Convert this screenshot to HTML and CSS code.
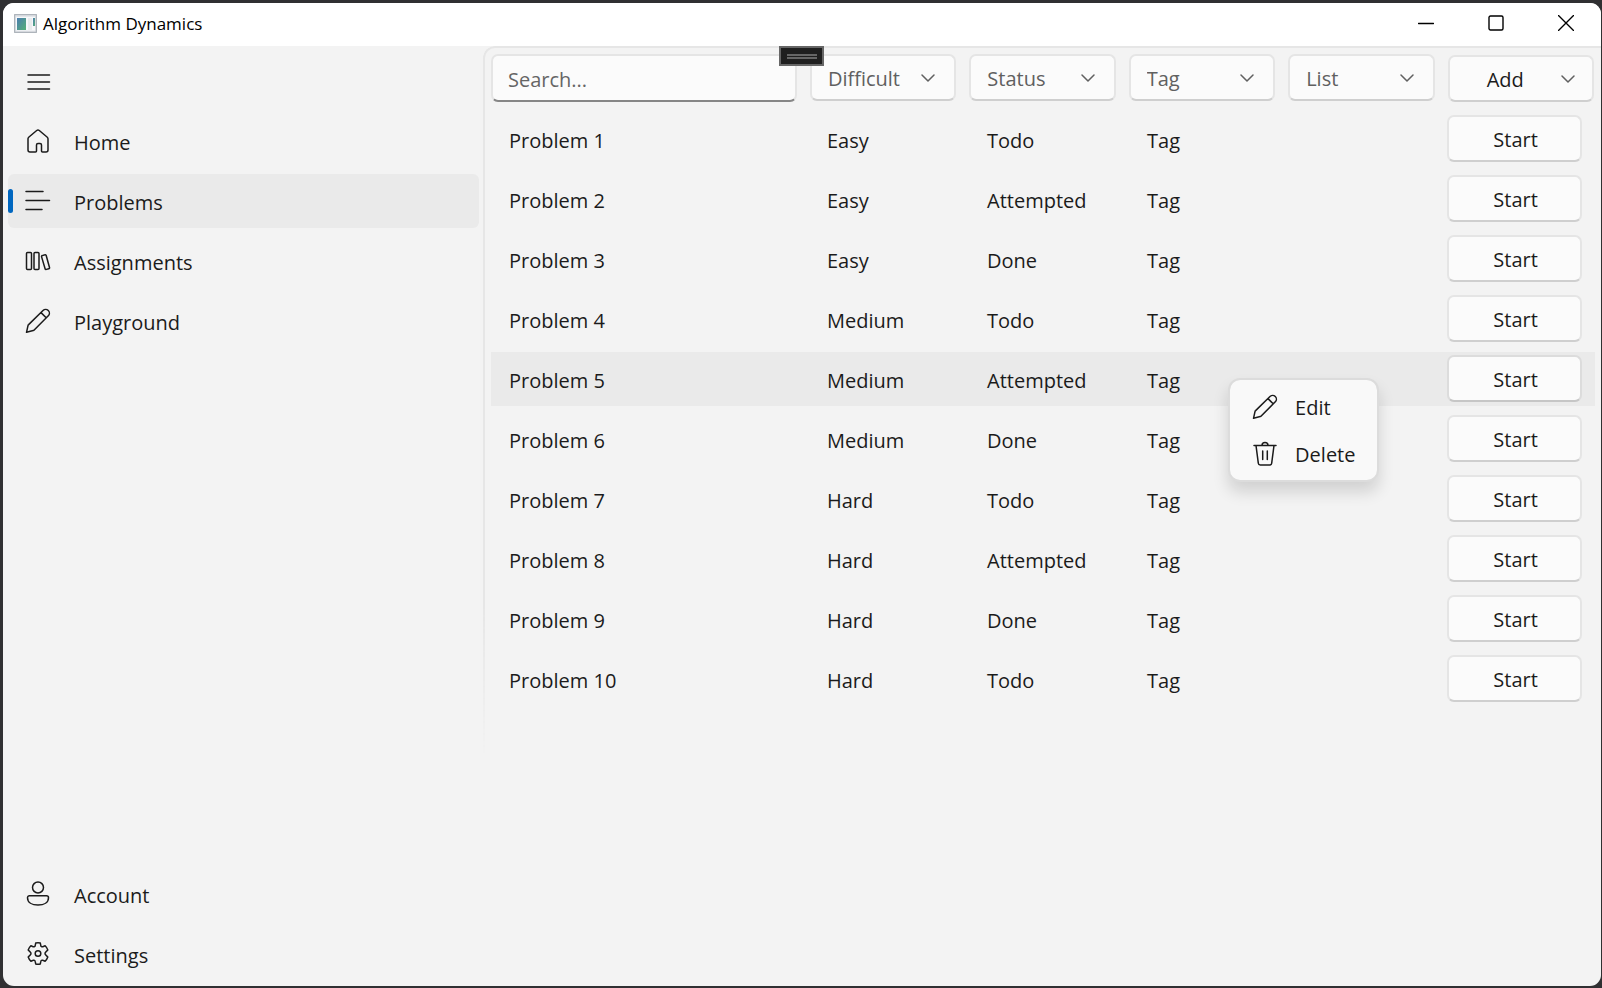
FILE: index.html
```html
<!DOCTYPE html>
<html lang="en">
<head>
<meta charset="utf-8">
<title>Algorithm Dynamics</title>
<link rel="stylesheet" href="styles.css">
</head>
<body>
<svg class="sprite" aria-hidden="true">
  <symbol id="chevron" viewBox="0 0 14 8"><path d="M1 1l6 6 6-6"/></symbol>
  <symbol id="pencil" viewBox="0 0 26 26"><path d="M1.500 24.300l1.500-6.700a2 2 0 0 1 .6-1L18 2.500a3.600 3.600 0 0 1 5.300 5.300L9.200 22a2 2 0 0 1-1 .6zM16 4.600l5.200 5.200"/></symbol>
</svg>
<div class="window">
  <header class="titlebar">
    <svg class="app-icon" viewBox="0 0 23 19"><defs><linearGradient id="g" x1="0" y1="0" x2="1" y2="1"><stop offset="0" stop-color="#4c7db0"/><stop offset="1" stop-color="#55b076"/></linearGradient></defs><rect x=".5" y=".5" width="22" height="18" rx="1" fill="#e3e6ea" stroke="#aeb4bb"/><rect x="2" y="3" width="19" height="13.500" fill="#f7f8fa"/><rect x="3" y="4" width="9" height="12" fill="url(#g)"/><rect x="14" y="4" width="4" height="12" fill="#e9ebed"/><rect x="19" y="4" width="2" height="8" fill="url(#g)"/></svg>
    <h1 class="title">Algorithm Dynamics</h1>
    <div class="caption">
      <button class="caption-btn" aria-label="Minimize"><svg viewBox="0 0 16 16"><path d="M.5 8.500h15"/></svg></button>
      <button class="caption-btn" aria-label="Maximize"><svg viewBox="0 0 16 16"><rect x="1" y="1" width="14" height="14" rx="1.500"/></svg></button>
      <button class="caption-btn" aria-label="Close"><svg viewBox="0 0 16 16"><path d="M.5.5l15 15M15.500.5l-15 15"/></svg></button>
    </div>
  </header>
  <div class="body">
    <nav class="sidebar">
      <button class="nav-item" aria-label="Menu"><svg class="icon" viewBox="0 0 26 26"><path d="M3 7h21.500M3 14h21.500M3 21h21.500"/></svg></button>
      <a class="nav-item" href="#"><svg class="icon" viewBox="0 0 26 26"><path d="M3 10.700a2 2 0 0 1 .7-1.500l8-6.700a2 2 0 0 1 2.600 0l8 6.700a2 2 0 0 1 .7 1.500V22a2 2 0 0 1-2 2h-3.500a1 1 0 0 1-1-1v-6a1.500 1.500 0 0 0-1.500-1.500h-2a1.500 1.500 0 0 0-1.500 1.500v6a1 1 0 0 1-1 1H5a2 2 0 0 1-2-2z"/></svg><span class="label">Home</span></a>
      <a class="nav-item selected" href="#" aria-current="page"><svg class="icon" viewBox="0 0 26 26"><path d="M1 3.500h17M1 12.500h23.500M1 21.500h16"/></svg><span class="label">Problems</span></a>
      <a class="nav-item" href="#"><svg class="icon" viewBox="0 0 26 26"><rect x="1.500" y="4.500" width="5" height="17" rx="1"/><rect x="9" y="4.500" width="5" height="17" rx="1"/><path d="M17.300 7.600l2.600-.8a1 1 0 0 1 1.300.7l3.300 12a1 1 0 0 1-.7 1.200l-2.400.7a1 1 0 0 1-1.300-.7L16.600 8.900a1 1 0 0 1 .7-1.300z"/></svg><span class="label">Assignments</span></a>
      <a class="nav-item" href="#"><svg class="icon"><use href="#pencil"/></svg><span class="label">Playground</span></a>
      <a class="nav-item footer-start" href="#"><svg class="icon" viewBox="0 0 26 26"><circle cx="13" cy="6.500" r="5.500"/><path d="M4.500 14.700h17a2 2 0 0 1 2 2c0 4.800-4.600 7.300-10.500 7.300S2.500 21.500 2.500 16.700a2 2 0 0 1 2-2z"/></svg><span class="label">Account</span></a>
      <a class="nav-item" href="#"><svg class="icon" viewBox="0 0 26 26"><circle cx="13" cy="12.500" r="2.800"/><path d="M10.700 2.100a11 11 0 0 1 4.600 0l.5 2.500a1.400 1.400 0 0 0 2 1.100l2.300-.9a10.500 10.500 0 0 1 2.700 4.200l-1.900 1.900a1.900 1.900 0 0 0 0 3.200l1.900 1.900a10.500 10.500 0 0 1-2.700 4.200l-2.300-.9a1.400 1.400 0 0 0-2 1.100l-.5 2.500a11 11 0 0 1-4.600 0l-.5-2.500a1.400 1.400 0 0 0-2-1.100l-2.300.9a10.500 10.500 0 0 1-2.700-4.200l1.900-1.900a1.900 1.900 0 0 0 0-3.200L3.200 9a10.500 10.500 0 0 1 2.700-4.200l2.300.9a1.400 1.400 0 0 0 2-1.100z"/></svg><span class="label">Settings</span></a>
    </nav>
    <main class="content">
      <div class="filters">
        <input class="search" type="text" placeholder="Search..." aria-label="Search">
        <div class="picker"><select class="control" aria-label="Difficulty"><option>Difficult</option></select><svg class="chevron"><use href="#chevron"/></svg></div>
        <div class="picker"><select class="control" aria-label="Status"><option>Status</option></select><svg class="chevron"><use href="#chevron"/></svg></div>
        <div class="picker"><select class="control" aria-label="Tag"><option>Tag</option></select><svg class="chevron"><use href="#chevron"/></svg></div>
        <div class="picker"><select class="control" aria-label="List"><option>List</option></select><svg class="chevron"><use href="#chevron"/></svg></div>
        <button class="control add">Add<svg class="chevron"><use href="#chevron"/></svg></button>
      </div>
      <table class="problems">
        <colgroup><col class="col-name"><col class="col-field"><col class="col-field"><col class="col-field"><col><col class="col-action"></colgroup>
        <tbody>
          <tr><td>Problem 1</td><td>Easy</td><td>Todo</td><td>Tag</td><td></td><td class="action"><button class="control start">Start</button></td></tr>
          <tr><td>Problem 2</td><td>Easy</td><td>Attempted</td><td>Tag</td><td></td><td class="action"><button class="control start">Start</button></td></tr>
          <tr><td>Problem 3</td><td>Easy</td><td>Done</td><td>Tag</td><td></td><td class="action"><button class="control start">Start</button></td></tr>
          <tr><td>Problem 4</td><td>Medium</td><td>Todo</td><td>Tag</td><td></td><td class="action"><button class="control start">Start</button></td></tr>
          <tr class="active"><td>Problem 5</td><td>Medium</td><td>Attempted</td><td class="anchor">Tag
            <div class="menu" role="menu">
              <button class="menu-item" role="menuitem"><svg class="icon"><use href="#pencil"/></svg><span class="label">Edit</span></button>
              <button class="menu-item" role="menuitem"><svg class="icon" viewBox="0 0 26 26"><path d="M2 4.500h22M10 4.500a3 3 0 0 1 6 0M4 4.500l2.300 17.700a2 2 0 0 0 2 1.800h9.400a2 2 0 0 0 2-1.800L22 4.500M10.700 10v8.500M15.300 10v8.500"/></svg><span class="label">Delete</span></button>
            </div></td><td></td><td class="action"><button class="control start">Start</button></td></tr>
          <tr><td>Problem 6</td><td>Medium</td><td>Done</td><td>Tag</td><td></td><td class="action"><button class="control start">Start</button></td></tr>
          <tr><td>Problem 7</td><td>Hard</td><td>Todo</td><td>Tag</td><td></td><td class="action"><button class="control start">Start</button></td></tr>
          <tr><td>Problem 8</td><td>Hard</td><td>Attempted</td><td>Tag</td><td></td><td class="action"><button class="control start">Start</button></td></tr>
          <tr><td>Problem 9</td><td>Hard</td><td>Done</td><td>Tag</td><td></td><td class="action"><button class="control start">Start</button></td></tr>
          <tr><td>Problem 10</td><td>Hard</td><td>Todo</td><td>Tag</td><td></td><td class="action"><button class="control start">Start</button></td></tr>
        </tbody>
      </table>
    </main>
    <div class="debug-handle"></div>
  </div>
</div>
</body>
</html>
```
FILE: styles.css
```css
* { box-sizing: border-box; }
body {
  margin: 0;
  min-height: 100vh;
  display: flex;
  padding: 3px 1px 2px 3px;
  background: #303032;
  color: #1b1b1b;
  font: 20px/28px "Open Sans", "Noto Sans", sans-serif;
}
button, input, select { font: inherit; color: inherit; margin: 0; }
button { padding: 0; border: 0; background: none; }
svg { fill: none; stroke: currentColor; stroke-width: 1.5; stroke-linecap: round; stroke-linejoin: round; flex: none; }
.sprite { position: absolute; width: 0; height: 0; }
.window {
  flex: 1;
  display: flex;
  flex-direction: column;
  border-radius: 11px;
  overflow: hidden;
  background: #f3f3f3;
}
.titlebar { display: flex; align-items: center; height: 43px; padding: 0 0 3px 11px; background: #fff; color: #000; }
.app-icon { width: 23px; height: 19px; stroke: none; }
.title { margin: 0 auto 0 6px; padding-top: 2px; font-size: 17px; font-weight: 400; line-height: 24px; }
.caption { display: flex; height: 100%; }
.caption-btn { display: grid; place-items: center; width: 70px; }
.caption-btn svg { width: 16px; height: 16px; stroke-width: 1.4; }
.body { flex: 1; display: flex; position: relative; }
.sidebar { display: flex; flex-direction: column; gap: 6px; width: 480px; padding: 8px 4px 5px 5px; }
.nav-item {
  position: relative;
  display: flex;
  align-items: center;
  gap: 23px;
  height: 54px;
  padding-left: 17px;
  border-radius: 6px;
  color: inherit;
  text-decoration: none;
}
.icon { width: 26px; height: 26px; }
.label { padding-top: 3px; }
.footer-start { margin-top: auto; }
.selected { background: #eaeaea; }
.selected::before { content: ""; position: absolute; left: 0; top: 15px; width: 5px; height: 24px; border-radius: 3px; background: #0067c0; }
.content {
  position: relative;
  flex: 1;
  padding: 8px 6px 0 8px;
}
.content::before {
  content: "";
  position: absolute;
  inset: 0;
  border: solid #e6e6e6;
  border-width: 2px 0 0 2px;
  border-top-left-radius: 12px;
  mask-image: linear-gradient(#000 560px, transparent 710px);
  pointer-events: none;
}
.filters { position: relative; display: grid; grid-template-columns: 305fr repeat(5, 146fr); gap: 13px; padding-right: 1px; }
.control, .search {
  width: 100%;
  height: 47px;
  border: 2px solid #e5e5e5;
  border-bottom-color: #cfcfcf;
  border-radius: 7px;
  background: #fbfbfb;
}
.search { height: 48px; padding: 2px 15px 0; border-bottom-color: #868686; }
.search::placeholder { color: #656565; opacity: 1; }
.picker { position: relative; color: #606060; }
.picker .control { appearance: none; padding: 2px 36px 0 16px; }
.chevron { position: absolute; right: 21px; top: 20px; width: 14px; height: 8px; }
.add { position: relative; margin-top: 1px; padding: 3px 31px 0 0; }
.add .chevron { right: 17px; top: 18px; color: #606060; }
.problems { position: relative; width: 100%; table-layout: fixed; border-collapse: separate; border-spacing: 0 6px; margin-top: 4px; }
.col-name { width: 28.8%; }
.col-field { width: 14.5%; }
.col-action { width: 13.4%; }
td { height: 54px; padding: 4px 0 0 18px; }
td.action { padding: 0 13px 2px 0; }
.start { display: block; padding: 3px 0 0 2px; }
.active td { background: #eaeaea; }
.active .control { border-color: #dcdcdc #dcdcdc #c6c6c6; }
.anchor { position: relative; }
.menu {
  position: absolute;
  z-index: 1;
  left: 99px;
  top: 26px;
  padding: 3px 0;
  width: 151px;
  border: 2px solid #dcdcdc;
  border-radius: 12px;
  background: #f9f9f9;
  background-clip: padding-box;
  box-shadow: 0 10px 16px rgba(0, 0, 0, .14);
}
.menu-item { display: flex; align-items: center; gap: 17px; width: 100%; height: 47px; padding-left: 22px; }
.debug-handle {
  position: absolute;
  left: calc(50% - 23px);
  top: 0;
  width: 45px;
  height: 20px;
  border: 2px solid #666;
  background: linear-gradient(#666 0 2px, #1f1f1f 2px 3px, #666 3px 5px) center / 30px 5px no-repeat #1f1f1f;
}
```
